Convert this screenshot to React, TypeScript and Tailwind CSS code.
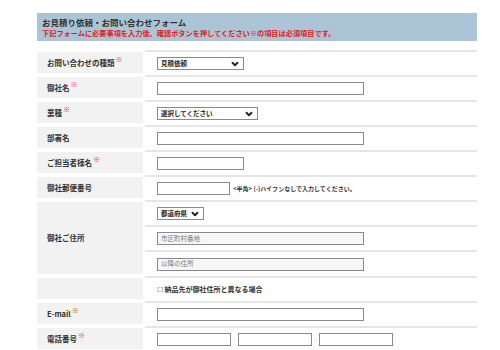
import { ChevronDown } from 'lucide-react'

const font = 'font-["Noto_Sans_CJK_JP","Noto_Sans",sans-serif]'

function Req() {
  return <span className="text-[#f0303a] text-[7px] font-bold relative -top-[3px] ml-[1px]">※</span>
}

function Row({
  label,
  required,
  children,
  h = 'h-[25px]',
}: {
  label?: string
  required?: boolean
  children: React.ReactNode
  h?: string
}) {
  return (
    <div className={`flex ${h}`}>
      <div className="w-[108px] shrink-0 py-[2px] pr-[2px]">
        <div className="h-full bg-[#f2f2f2] flex items-center pl-[10px] text-[7.5px] font-bold text-[#333]">
          {label}
          {required && <Req />}
        </div>
      </div>
      <div className="flex-1 border-t-2 border-[#e6e6e6] flex items-center pl-[12px]">{children}</div>
    </div>
  )
}

function Input({ w, placeholder, bg = 'bg-white' }: { w: string; placeholder?: string; bg?: string }) {
  return (
    <div className={`${w} h-[13px] border border-[#8a8a8a] ${bg} flex items-center pl-[3px] text-[6.5px] text-[#777]`}>
      {placeholder}
    </div>
  )
}

function Select({ w, text }: { w: string; text: string }) {
  return (
    <div className={`${w} h-[13px] border border-[#8a8a8a] bg-white flex items-center justify-between px-[3px] text-[6.5px] font-bold text-[#222]`}>
      <span>{text}</span>
      <ChevronDown className="w-[10px] h-[10px]" strokeWidth={4.5} />
    </div>
  )
}

export default function App() {
  return (
    <div className={`w-[500px] h-[350px] bg-white overflow-hidden pt-[13px] pl-[37px] ${font}`}>
      <div className="w-[440px]">
        <div className="h-[28px] bg-[#abc5d6] pl-[5px] pt-[3px]">
          <div className="text-[8.5px] font-bold text-[#333] leading-[12px]">お見積り依頼・お問い合わせフォーム</div>
          <div className="text-[7.2px] font-bold text-[#e02020] leading-[10px]">
            下記フォームに必要事項を入力後、確認ボタンを押してください※の項目は必須項目です。
          </div>
        </div>
        <div className="h-[9px]" />
        <Row label="お問い合わせの種類" required>
          <Select w="w-[87px]" text="見積依頼" />
        </Row>
        <Row label="御社名" required>
          <Input w="w-[207px]" />
        </Row>
        <Row label="業種" required>
          <Select w="w-[101px]" text="選択してください" />
        </Row>
        <Row label="部署名">
          <Input w="w-[207px]" />
        </Row>
        <Row label="ご担当者様名" required>
          <Input w="w-[87px]" />
        </Row>
        <Row label="御社郵便番号">
          <Input w="w-[73px]" />
          <span className="ml-[3px] text-[6px] font-bold text-[#333]">&lt;半角&gt; (-)ハイフンなしで入力してください。</span>
        </Row>
        <div className="flex h-[76px]">
          <div className="w-[108px] shrink-0 py-[2px] pr-[2px]">
            <div className="h-full bg-[#f2f2f2] flex items-center pl-[10px] text-[7.5px] font-bold text-[#333]">
              御社ご住所
            </div>
          </div>
          <div className="flex-1 flex flex-col">
            <div className="h-[25px] border-t-2 border-[#e6e6e6] flex items-center pl-[12px]">
              <Select w="w-[47px]" text="都道府県" />
            </div>
            <div className="h-[25px] border-t-2 border-[#e6e6e6] flex items-center pl-[12px]">
              <Input w="w-[207px]" placeholder="市区町村番地" bg="bg-[#f7f7f7]" />
            </div>
            <div className="h-[26px] border-t-2 border-[#e6e6e6] flex items-center pl-[12px]">
              <Input w="w-[207px]" placeholder="以降の住所" bg="bg-[#f7f7f7]" />
            </div>
          </div>
        </div>
        <Row>
          <span className="text-[7px] font-bold text-[#333]">
            <span className="font-normal text-[#555]">☐</span> 納品先が御社住所と異なる場合
          </span>
        </Row>
        <Row label="E-mail" required>
          <Input w="w-[207px]" />
        </Row>
        <Row label="電話番号" required>
          <Input w="w-[74px]" />
          <span className="w-[7px] text-center text-[6px] text-[#aaa]">-</span>
          <Input w="w-[74px]" />
          <span className="w-[7px] text-center text-[6px] text-[#aaa]">-</span>
          <Input w="w-[74px]" />
        </Row>
      </div>
    </div>
  )
}
